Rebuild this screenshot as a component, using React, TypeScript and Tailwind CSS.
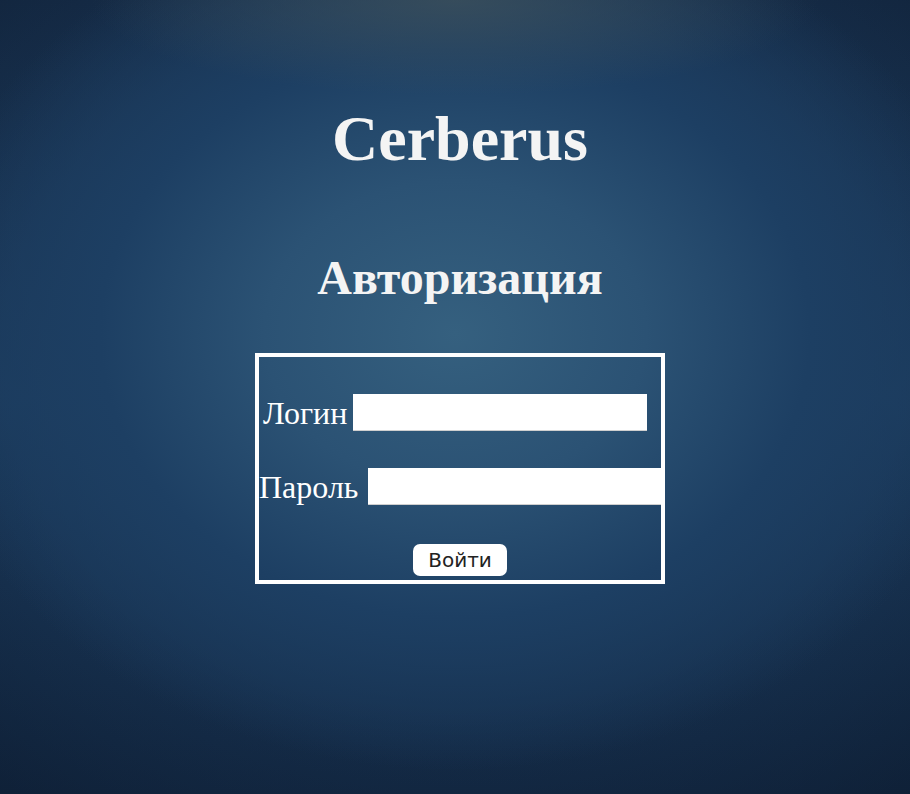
export default function App() {
  return (
    <div className="min-h-[794px] w-full bg-[#132a47] bg-[radial-gradient(ellipse_40%_12%_at_50%_0%,rgba(72,88,92,0.6)_0%,rgba(72,88,92,0)_100%),radial-gradient(ellipse_60%_55%_at_50%_42%,#35607f_0%,#2b5274_35%,#1d3f63_65%,rgba(20,45,75,0)_100%),radial-gradient(ellipse_90%_80%_at_50%_45%,rgba(0,0,0,0)_55%,rgba(5,12,25,0.45)_100%),linear-gradient(to_bottom,#172f4c_0%,#1b3a5c_50%,#142b47_100%)] font-['Liberation_Serif',serif] text-white overflow-hidden">
      <div className="flex flex-col items-center pt-[107px] pl-[10px]">
        <h1 className="text-[64px] font-bold leading-none text-[#f4f4f4]">Cerberus</h1>
        <h2 className="mt-[83px] text-[48px] font-bold leading-none text-[#f4f4f4]">Авторизация</h2>
        <form
          className="mt-[51px] w-[410px] border-4 border-white flex flex-col overflow-hidden"
          onSubmit={(e) => e.preventDefault()}
        >
          <div className="mt-[37px] h-[37px] flex w-max ml-[4px] items-center gap-[6px]">
            <label className="text-[32px] leading-none">Логин</label>
            <input type="text" className="w-[294px] h-[37px] bg-white border-b border-[#cfcfcf] outline-none" />
          </div>
          <div className="mt-[37px] h-[37px] flex w-max items-center gap-[10px]">
            <label className="text-[32px] leading-none">Пароль</label>
            <input type="password" className="w-[294px] h-[37px] bg-white border-b border-[#cfcfcf] outline-none" />
          </div>
          <div className="mt-[39px] mb-[4px] flex justify-center">
            <button className="w-[94px] h-[32px] rounded-[7px] bg-white text-[#222] text-[20px] font-['DejaVu_Sans',sans-serif] leading-none">
              Войти
            </button>
          </div>
        </form>
      </div>
    </div>
  );
}
